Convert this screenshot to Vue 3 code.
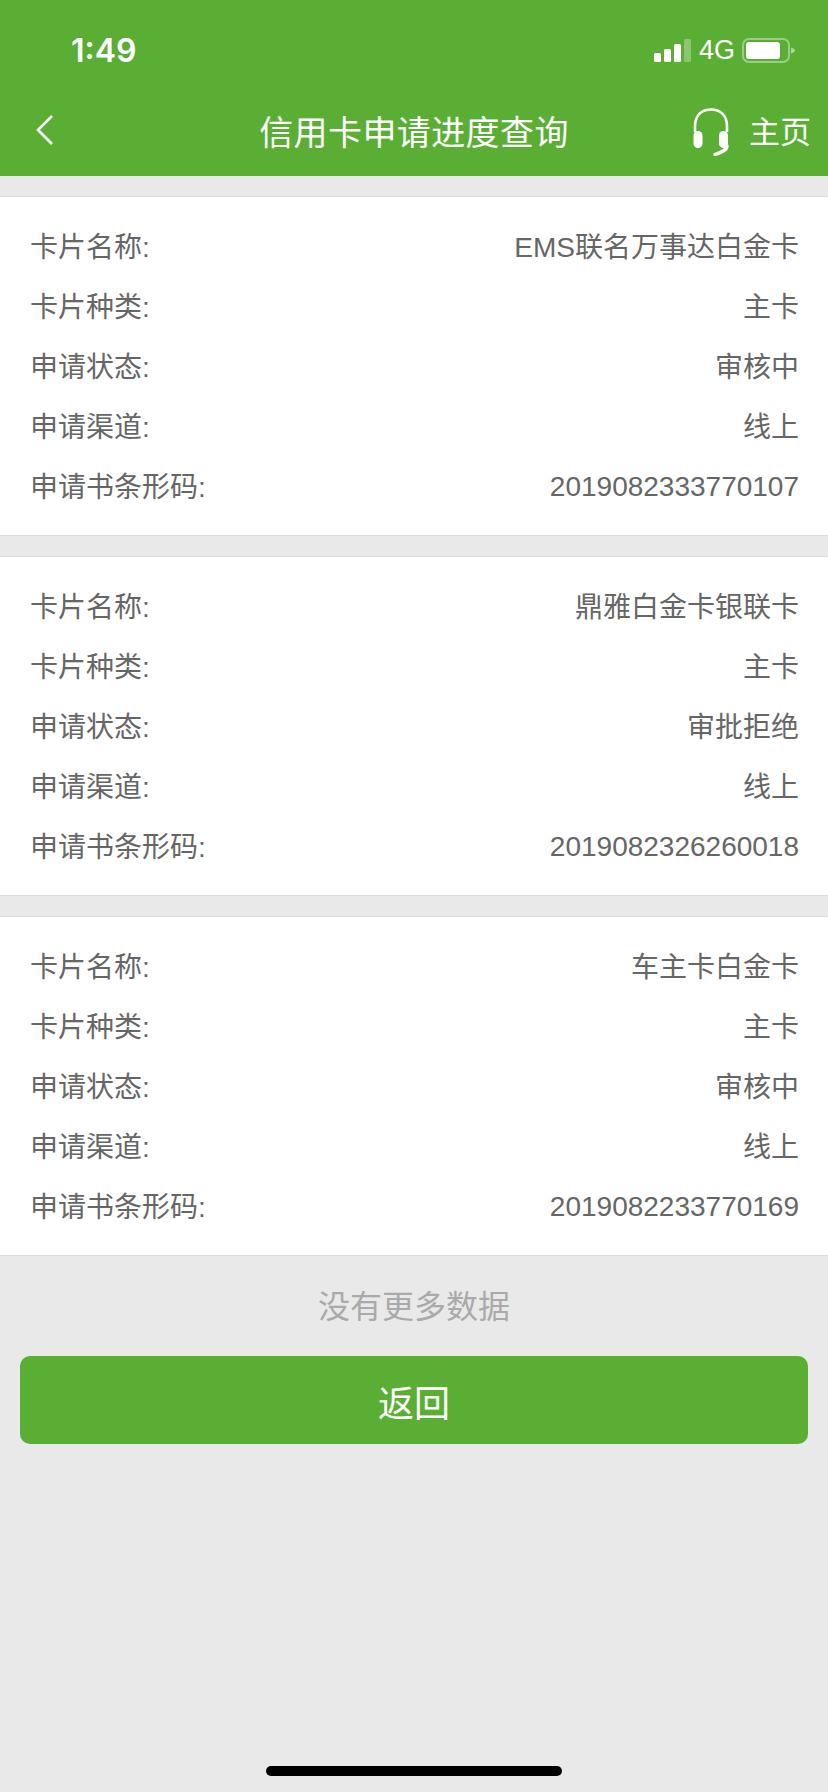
<script setup>
const cards = [
  { name: 'EMS联名万事达白金卡', kind: '主卡', status: '审核中', channel: '线上', code: '2019082333770107' },
  { name: '鼎雅白金卡银联卡', kind: '主卡', status: '审批拒绝', channel: '线上', code: '2019082326260018' },
  { name: '车主卡白金卡', kind: '主卡', status: '审核中', channel: '线上', code: '2019082233770169' }
];

const rows = [
  { label: '卡片名称:', key: 'name' },
  { label: '卡片种类:', key: 'kind' },
  { label: '申请状态:', key: 'status' },
  { label: '申请渠道:', key: 'channel' },
  { label: '申请书条形码:', key: 'code' }
];
</script>

<template>
  <div class="page">
    <header class="top">
      <div class="status-bar">
        <span class="time">1:49</span>
        <div class="status-right">
          <svg class="signal" width="37" height="23" viewBox="0 0 37 23">
            <rect x="0" y="14" width="7" height="9" rx="1.5" fill="#fff" />
            <rect x="10" y="10" width="7" height="13" rx="1.5" fill="#fff" />
            <rect x="20" y="5" width="7" height="18" rx="1.5" fill="#fff" />
            <rect x="30" y="0" width="7" height="23" rx="1.5" fill="#fff" opacity="0.3" />
          </svg>
          <span class="net">4G</span>
          <svg class="battery" width="53" height="25" viewBox="0 0 53 25">
            <rect x="1" y="1" width="46" height="23" rx="6" fill="none" stroke="#fff" stroke-width="2" opacity="0.4" />
            <rect x="4" y="4" width="34" height="17" rx="3" fill="#fff" />
            <path d="M49 9.5 C52 10.5 53 11.5 53 12.5 C53 13.5 52 14.5 49 15.5 Z" fill="#fff" opacity="0.5" />
          </svg>
        </div>
      </div>
      <nav class="nav">
        <svg class="back" width="20" height="32" viewBox="0 0 20 32">
          <path d="M17 2 L3 16 L17 30" fill="none" stroke="#fff" stroke-width="2.6" />
        </svg>
        <h1 class="title">信用卡申请进度查询</h1>
        <div class="nav-right">
          <svg class="headset" width="36" height="48" viewBox="0 0 36 48">
            <path d="M2 24 V18 C2 7 9 1.5 18 1.5 C27 1.5 34 7 34 18 V24" fill="none" stroke="#fff" stroke-width="2.6" />
            <rect x="0.5" y="23" width="9" height="17" rx="4.5" fill="#fff" />
            <rect x="26" y="23" width="9" height="17" rx="4.5" fill="#fff" />
            <path d="M34 38 C34 42 29 44 22 46.5" fill="none" stroke="#fff" stroke-width="3.4" stroke-linecap="round" />
          </svg>
          <span class="home">主页</span>
        </div>
      </nav>
    </header>

    <main class="list">
      <section v-for="card in cards" :key="card.code" class="card">
        <div v-for="row in rows" :key="row.key" class="row">
          <span>{{ row.label }}</span>
          <span :class="{ code: row.key === 'code' }">{{ card[row.key] }}</span>
        </div>
      </section>
    </main>

    <p class="no-more">没有更多数据</p>
    <button class="back-btn"><span>返回</span></button>
    <div class="home-indicator"></div>
  </div>
</template>

<style scoped>
.page {
  position: relative;
  height: 1792px;
  overflow: hidden;
  background: #e9e9e9;
  font-family: "Liberation Sans", "Noto Sans CJK SC", sans-serif;
}

.top {
  height: 176px;
  background: #59ae33;
  color: #fff;
}

.status-bar {
  height: 88px;
  display: flex;
  align-items: center;
  justify-content: space-between;
  padding: 12px 33px 0 71px;
  box-sizing: border-box;
}

.time {
  font-family: Inter, "Liberation Sans", sans-serif;
  font-size: 32px;
  font-weight: 600;
}

.status-right {
  display: flex;
  align-items: center;
}

.net {
  font-size: 27px;
  margin: 0 7px 0 8px;
}

.nav {
  height: 88px;
  display: flex;
  align-items: center;
  justify-content: space-between;
  position: relative;
  padding: 0 17px 0 35px;
}

.back {
  margin-bottom: 5px;
}

.title {
  position: absolute;
  left: 0;
  right: 0;
  text-align: center;
  margin: 0;
  padding-bottom: 4px;
  font-size: 34px;
  font-weight: 400;
  letter-spacing: 0.4px;
}

.nav-right {
  display: flex;
  align-items: center;
  gap: 20px;
}

.home {
  font-size: 31px;
  padding-bottom: 5px;
}

.card {
  background: #fff;
  border-top: 1px solid #dcdcdc;
  border-bottom: 1px solid #dcdcdc;
  padding: 20px 29px 18px 30px;
  margin-top: 20px;
}

.row {
  height: 60px;
  box-sizing: border-box;
  padding-bottom: 4px;
  display: flex;
  align-items: center;
  justify-content: space-between;
  font-size: 28px;
  color: #666;
}

.code {
  padding-top: 4px;
}

.no-more {
  margin: 0;
  height: 100px;
  line-height: 102px;
  text-align: center;
  font-size: 32px;
  color: #aaa;
}

.back-btn {
  display: block;
  width: 788px;
  height: 88px;
  margin: 0 20px;
  padding: 2px 0 0;
  border: none;
  border-radius: 10px;
  background: #59ae33;
  color: #fff;
  font-family: inherit;
  font-size: 36px;
}

.home-indicator {
  position: absolute;
  left: 266px;
  bottom: 16px;
  width: 296px;
  height: 10px;
  border-radius: 5px;
  background: #000;
}
</style>
